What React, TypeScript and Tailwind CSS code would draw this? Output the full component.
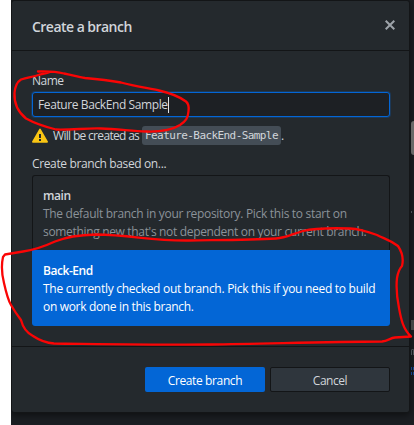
export default function App() {
  return (
    <div className="relative flex h-[425px] w-[414px] overflow-hidden bg-white pl-[11px] font-['Open_Sans','Noto_Sans',sans-serif] text-[12px] leading-[18px] text-[#d1d5da]">
      <div className="h-[425px] flex-1 overflow-hidden bg-[#1b1e22]">
        <section className="flex h-[413px] w-[399px] flex-col rounded-[3px] border border-[#131517] bg-[#24292d] shadow-[0_2px_7px_rgba(0,0,0,0.5)]">
          <header className="flex h-[50px] shrink-0 items-center justify-between border-b border-[#131517] pr-[14px] pl-[20px]">
            <h1 className="mt-[2px] text-[14px] font-semibold tracking-[-0.53px]">Create a branch</h1>
            <svg width="10" height="10" viewBox="0 0 10 10" className="mt-[-1px]" fill="none" stroke="#9da3a9" strokeWidth="2">
              <path d="M.7.7 9.3 9.3M9.3.7.7 9.3" />
            </svg>
          </header>
          <main className="flex h-[296px] shrink-0 flex-col border-b border-[#131517] px-[20px] pt-[21px]">
            <label className="h-[20px] tracking-[-0.5px]">Name</label>
            <div className="flex h-[25px] w-[358px] shrink-0 items-center rounded-[3px] border border-[#0366d6] bg-[#1d2024] pl-[5px] shadow-[0_0_0_1px_rgba(3,102,214,0.25)]">
              <span className="pt-px tracking-[-0.4px] whitespace-nowrap">Feature BackEnd Sample</span>
              <span className="h-[16px] w-px bg-[#e1e4e8]" />
            </div>
            <div className="mt-[9px] flex h-[19px] shrink-0 items-center">
              <svg width="16" height="16" viewBox="0 0 16 16" className="shrink-0">
                <path d="M7.15 1.3a1 1 0 0 1 1.7 0l6.9 12a1 1 0 0 1-.85 1.5H1.1a1 1 0 0 1-.85-1.5z" fill="#f9c513" />
                <path d="M7 6h2v4H7zM7 11h2v2H7z" fill="#24292d" />
              </svg>
              <span className="ml-[5px] w-[89px] shrink-0 tracking-[-0.68px] whitespace-nowrap">Will be created as</span>
              <code className="flex h-[19px] w-[139px] shrink-0 items-center rounded-[3px] bg-[#444d56] pl-[3px] font-['DejaVu_Sans_Mono',monospace] text-[11px] tracking-[-0.58px] whitespace-nowrap">Feature-BackEnd-Sample</code>
              <span>.</span>
            </div>
            <p className="mt-[10px] h-[20px] tracking-[-0.37px]">Create branch based on...</p>
            <div className="flex w-[358px] flex-col rounded-[3px] border border-b-0 border-[#131517]">
              <div className="h-[74px] pt-[11px] pl-[10px] whitespace-nowrap text-[#8b9299]">
                <p className="font-semibold tracking-[-0.4px] text-[#d1d5da]">main</p>
                <p className="tracking-[-0.3px]">The default branch in your repository. Pick this to start on</p>
                <p className="tracking-[-0.33px]">something new that's not dependent on your current branch.</p>
              </div>
              <div className="mx-[-1px] h-[76px] rounded-b-[3px] bg-[#0366d6] pt-[12px] pl-[11px] whitespace-nowrap text-white">
                <p className="font-semibold tracking-[-0.45px]">Back-End</p>
                <p className="tracking-[-0.29px]">The currently checked out branch. Pick this if you need to build</p>
                <p className="tracking-[-0.33px]">on work done in this branch.</p>
              </div>
            </div>
          </main>
          <footer className="flex justify-end gap-[5px] pt-[20px] pr-[19px]">
            <button className="h-[25px] w-[120px] rounded-[2px] bg-[#0366d6] pt-[3px] tracking-[-0.38px] text-white">Create branch</button>
            <button className="h-[25px] w-[120px] rounded-[2px] border border-[#131517] bg-[#2f363d] pt-[3px] tracking-[-0.45px]">Cancel</button>
          </footer>
        </section>
      </div>
      <div className="absolute top-[121px] left-[411px] h-[34px] w-[6px] rounded-l-[3px] bg-[#686868]" />
      <div className="absolute top-[211px] left-[411px] h-[2px] w-px bg-[#4b5056]" />
      <div className="absolute top-[320px] left-[411px] h-[10px] w-[3px] bg-[#444546]" />
      <div className="absolute top-[349px] left-[411px] h-[6px] w-[3px] rounded-t-[2px] border-t border-r border-l border-[#4b5056]" />
      <div className="absolute top-[367px] left-[411px] h-[8px] w-[3px] border-x border-dashed border-[#15428a]" />
      <svg className="absolute top-0 left-0" width="414" height="425" fill="none" stroke="#fa0505" strokeWidth="2.3" strokeLinecap="round" strokeLinejoin="round">
        <path d="M38 71.500C49 71 56 71.500 64 73.500C72 75 78 77 85 78C97 79 110 80.500 121 82.500C134 86 147 88 159 90.500C170 93 180 97 186 101.500C189 104 189 107 188.500 111C188 118 186 121 180 125C172 130 161 132 146 131.500C132 131 117 129 101 128.500C87 128 72 130 56 129.500C46 127 36 124 26 118.500C18 112 14 103 14.500 93C15 87 17 82 21 79.500C27 77.500 32 77 37 75.500C42 74 46 73.500 50 72" />
        <path d="M189 240.500C150 241 133 235 96 234.500C77 235 66 237 55 241.500C43 247 34 250 23 251.500L5 254.500L3 257C1 266 2 275 4 283C6 292 8 300 11 305C15 312 18 316 21 320C23 328 27 333 33 336C39 340 46 343 54 343.500C100 344 160 345 211 344.500C260 344 320 342 382 341.500C388 341 390 338 395 337.500L411 336.500C403 329 401 319 399 308C397 298 396 287 397 278C398 272 399 269 402 266C404 258 402 252 398 246C390 240 385 239 377 235C366 231 360 229 350 228.500C334 228 315 228 303 231C292 234 286 238 276 238.500C250 240 220 240 189 240.500" />
      </svg>
    </div>
  );
}
